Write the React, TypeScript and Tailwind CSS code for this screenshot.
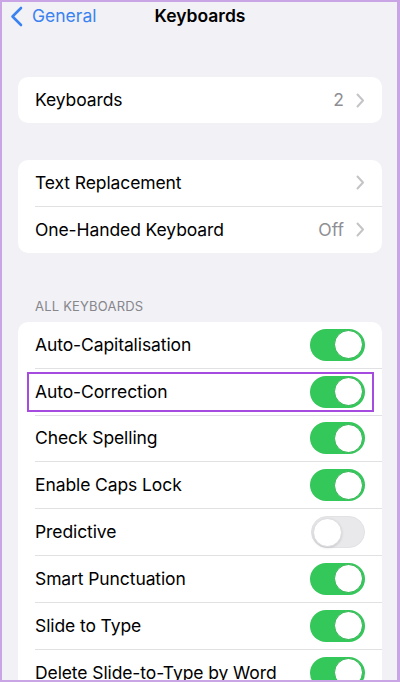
import React from 'react';

const font = { fontFamily: 'Inter, "Liberation Sans", sans-serif' };

function Chevron() {
  return (
    <svg width="9" height="15" viewBox="0 0 9 15" className="ml-3">
      <path d="M1.5 1.5 L7 7.5 L1.5 13.5" fill="none" stroke="#c4c4c7" strokeWidth="2" strokeLinecap="round" strokeLinejoin="round" />
    </svg>
  );
}

function Toggle({ on }: { on: boolean }) {
  return on ? (
    <div className="w-[55px] h-[32px] rounded-full bg-[#34c759] flex items-center justify-end pr-[2px]">
      <div className="w-[29px] h-[29px] rounded-full bg-white border-[1.5px] border-[#2fb350]" />
    </div>
  ) : (
    <div className="w-[54px] h-[32px] rounded-full bg-[#e9e9eb] border border-[#e2e2e5] flex items-center pl-[1px]">
      <div className="w-[29px] h-[29px] rounded-full bg-white border border-[#dcdcdf] shadow-sm" />
    </div>
  );
}

function Row({ label, value, chevron, toggle, last, h = 'h-[46px]' }: {
  label: string;
  value?: string;
  chevron?: boolean;
  toggle?: boolean;
  last?: boolean;
  h?: string;
}) {
  return (
    <div className="pl-[17px]">
      <div className={`${h} flex items-center pr-[17px] ${last ? '' : 'border-b border-[#e1e1e4]'}`}>
        <span className="flex-1 text-[17.5px] text-black tracking-[-0.1px]">{label}</span>
        {value && <span className="text-[17.5px] text-[#8e8e93]">{value}</span>}
        {chevron && <Chevron />}
        {toggle !== undefined && <Toggle on={toggle} />}
      </div>
    </div>
  );
}

export default function App() {
  const toggles: [string, boolean][] = [
    ['Auto-Capitalisation', true],
    ['Auto-Correction', true],
    ['Check Spelling', true],
    ['Enable Caps Lock', true],
    ['Predictive', false],
    ['Smart Punctuation', true],
    ['Slide to Type', true],
    ['Delete Slide-to-Type by Word', true],
  ];
  return (
    <div className="relative w-[400px] h-[682px] overflow-hidden bg-[#f1f1f6]" style={font}>
      <div className="h-[32px] flex items-center relative">
        <div className="flex items-center pl-[10px] text-[#3a82f0]">
          <svg width="13" height="21" viewBox="0 0 13 21">
            <path d="M11 2 L2.5 10.5 L11 19" fill="none" stroke="#3a82f0" strokeWidth="2.6" strokeLinecap="round" strokeLinejoin="round" />
          </svg>
          <span className="ml-[9px] text-[17.5px]">General</span>
        </div>
        <span className="absolute left-0 right-0 text-center text-[17.5px] font-semibold text-black pointer-events-none">Keyboards</span>
      </div>

      <div className="mx-[18px] mt-[45px] bg-white rounded-[10px]">
        <Row label="Keyboards" value="2" chevron last />
      </div>

      <div className="mx-[18px] mt-[37px] bg-white rounded-[10px]">
        <Row label="Text Replacement" chevron h="h-[46.5px]" />
        <Row label="One-Handed Keyboard" value="Off" chevron last h="h-[46.5px]" />
      </div>

      <div className="mt-[45px] pl-[35px] text-[13px] text-[#86868b] tracking-[0.2px] leading-[16px]">ALL KEYBOARDS</div>

      <div className="mx-[18px] mt-[8px] bg-white rounded-[10px] relative">
        {toggles.map(([label, on], i) => (
          <div key={label} className="relative">
            <Row label={label} toggle={on} h="h-[46.8px]" last={i === toggles.length - 1} />
            {label === 'Auto-Correction' && (
              <div className="absolute left-[9px] right-[8px] top-[3px] bottom-[4px] border-2 border-[#a64be0] pointer-events-none" />
            )}
          </div>
        ))}
      </div>

      <div className="absolute inset-0 border-2 border-r-[3px] border-[#c9a5e6] pointer-events-none" />
    </div>
  );
}
